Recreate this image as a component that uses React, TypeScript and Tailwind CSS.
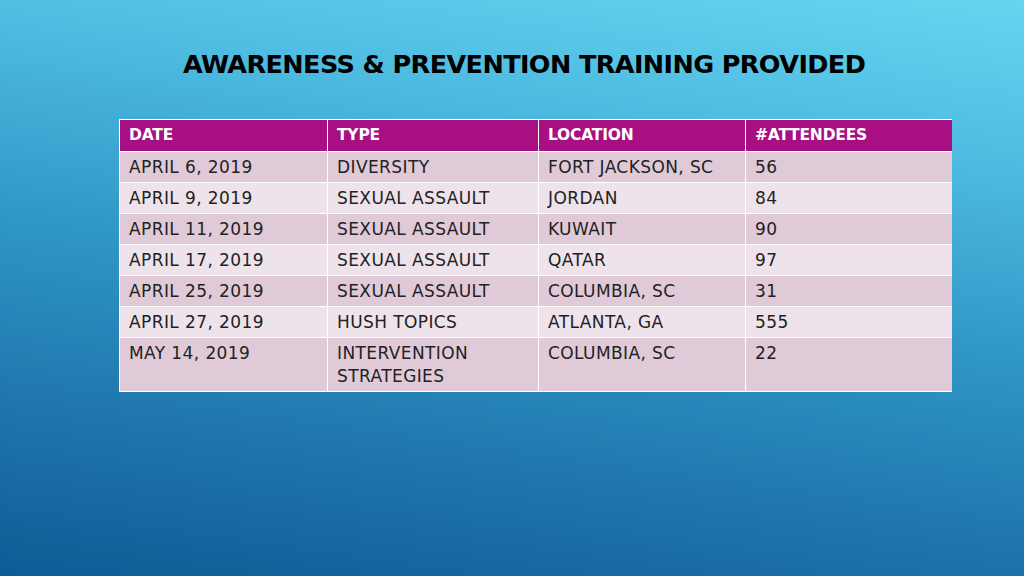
const rows: [string, string, string, string][] = [
  ['APRIL 6, 2019', 'DIVERSITY', 'FORT JACKSON, SC', '56'],
  ['APRIL 9, 2019', 'SEXUAL ASSAULT', 'JORDAN', '84'],
  ['APRIL 11, 2019', 'SEXUAL ASSAULT', 'KUWAIT', '90'],
  ['APRIL 17, 2019', 'SEXUAL ASSAULT', 'QATAR', '97'],
  ['APRIL 25, 2019', 'SEXUAL ASSAULT', 'COLUMBIA, SC', '31'],
  ['APRIL 27, 2019', 'HUSH TOPICS', 'ATLANTA, GA', '555'],
  ['MAY 14, 2019', 'INTERVENTION STRATEGIES', 'COLUMBIA, SC', '22'],
];

const headers = ['DATE', 'TYPE', 'LOCATION', '#ATTENDEES'];

export default function App() {
  return (
    <div className="h-[576px] w-[1024px] overflow-hidden bg-[linear-gradient(188deg,#66d5ef_0%,#4fbde2_22%,#2f97c6_50%,#2077ad_75%,#0e5c95_100%)] font-['DejaVu_Sans',sans-serif]">
      <h1 className="pl-[183px] pt-[46px] text-[25.5px] font-bold leading-[36px] tracking-[-0.6px] text-black">
        AWARENESS &amp; PREVENTION TRAINING PROVIDED
      </h1>
      <div className="ml-[119px] mt-[37px] grid w-[833px] grid-cols-[207px_210px_206px_206px] gap-[1px] border border-white bg-white">
        {headers.map((h) => (
          <div key={h} className="flex h-[31px] items-center bg-[#a70f82] pl-[9px] text-[15.5px] font-bold tracking-[-0.2px] text-white">
            {h}
          </div>
        ))}
        {rows.map((r, i) =>
          r.map((c, j) => (
            <div
              key={`${i}-${j}`}
              className={`${i % 2 === 0 ? 'bg-[#e1cad8]' : 'bg-[#efe3eb]'} ${i === 6 ? 'h-[53px] pt-[4px]' : 'flex h-[30px] items-center'} pl-[9px] pr-2 text-[17px] leading-[23px] tracking-[0.4px] text-[#222]`}
            >
              {j === 1 && i === 6 ? (
                <>
                  INTERVENTION
                  <br />
                  STRATEGIES
                </>
              ) : (
                c
              )}
            </div>
          ))
        )}
      </div>
    </div>
  );
}
